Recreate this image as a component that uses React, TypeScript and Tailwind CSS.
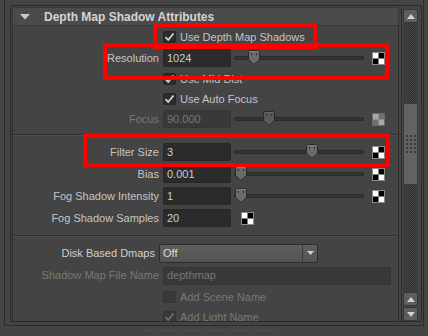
import React from "react";

const label = "text-[11px] leading-none text-[#c4c4c4] whitespace-nowrap";
const dim = "text-[11px] leading-none text-[#787878] whitespace-nowrap";

function Check({ on = true, disabled = false }: { on?: boolean; disabled?: boolean }) {
    return (
        <div
            className={`w-[13px] h-[12px] rounded-[2px] border flex items-center justify-center ${
                disabled ? "bg-[#3a3a3a] border-[#333]" : "bg-[#2b2b2b] border-[#262626]"
            }`}
        >
            {on && (
                <svg width="11" height="10" viewBox="0 0 11 10">
                    <path
                        d="M1.5 5.2 L4.2 8 L9.5 1.5"
                        fill="none"
                        stroke={disabled ? "#6e6e6e" : "#d6d6d6"}
                        strokeWidth="1.8"
                    />
                </svg>
            )}
        </div>
    );
}

function CheckRow({ text, on = true, disabled = false, h }: { text: string; on?: boolean; disabled?: boolean; h: string }) {
    return (
        <div className={`flex items-center pl-[150px] gap-[4px] ${h}`}>
            <Check on={on} disabled={disabled} />
            <span className={disabled ? dim : label}>{text}</span>
        </div>
    );
}

function Field({ value, w, disabled = false }: { value: string; w: string; disabled?: boolean }) {
    return (
        <div
            className={`${w} h-[18px] rounded-[2px] border flex items-center pl-[3px] text-[11px] leading-none ${
                disabled ? "bg-[#393939] border-[#353535] text-[#767676]" : "bg-[#2b2b2b] border-[#272727] text-[#cdcdcd]"
            }`}
        >
            {value}
        </div>
    );
}

function Thumb({ disabled = false }: { disabled?: boolean }) {
    return (
        <svg width="12" height="15" viewBox="0 0 12 15">
            <path
                d="M1.5 0.5 H10.5 L11.5 1.5 V9.5 L6 14.5 L0.5 9.5 V1.5 Z"
                fill={disabled ? "#5a5a5a" : "#6a6a6a"}
                stroke="#2a2a2a"
            />
            <path d="M2 1.5 H10" stroke={disabled ? "#666" : "#808080"} />
            <rect x="3" y="3" width="1" height="2" fill="#2e2e2e" />
            <rect x="8" y="3" width="1" height="2" fill="#2e2e2e" />
        </svg>
    );
}

function Slider({ at, disabled = false }: { at: string; disabled?: boolean }) {
    return (
        <div className="relative ml-[3px] w-[130px] h-[18px] flex items-center">
            <div className="w-full h-[4px] rounded-full bg-[#343434] border border-[#2a2a2a]" />
            <div className={`absolute top-[1px] ${at}`}>
                <Thumb disabled={disabled} />
            </div>
        </div>
    );
}

function MapBtn({ ml, disabled = false }: { ml: string; disabled?: boolean }) {
    const a = disabled ? "#a8a8a8" : "#ffffff";
    const b = disabled ? "#707070" : "#000000";
    return (
        <svg width="13" height="13" viewBox="0 0 13 13" className={ml}>
            <rect x="0.5" y="0.5" width="12" height="12" fill={a} stroke={disabled ? "#6a6a6a" : "#8a8a8a"} />
            <rect x="6.5" y="1" width="5.5" height="5.5" fill={b} />
            <rect x="1" y="6.5" width="5.5" height="5.5" fill={b} />
        </svg>
    );
}

function FieldRow({
    name,
    value,
    h = "h-[22px]",
    disabled = false,
    children,
}: {
    name: string;
    value: string;
    h?: string;
    disabled?: boolean;
    children?: React.ReactNode;
}) {
    return (
        <div className={`flex items-center ${h}`}>
            <div className={`w-[146px] text-right ${disabled ? dim : label}`}>{name}</div>
            <div className="ml-[4px]">
                <Field value={value} w="w-[68px]" disabled={disabled} />
            </div>
            {children}
        </div>
    );
}

function Sep({ mt, mb }: { mt: string; mb: string }) {
    return <div className={`${mt} ${mb} h-[2px] border-t border-[#2f2f2f] border-b border-b-[#4d4d4d] mr-[1px]`} />;
}

function ScrollBtn({ up }: { up: boolean }) {
    return (
        <div className="w-[15px] h-[14px] rounded-[2px] bg-[#5e5e5e] border border-[#353535] flex items-center justify-center">
            <svg width="8" height="5" viewBox="0 0 8 5">
                <path d={up ? "M0 5 L4 0 L8 5 Z" : "M0 0 L8 0 L4 5 Z"} fill="#d2d2d2" />
            </svg>
        </div>
    );
}

export default function App() {
    return (
        <div className="relative w-[428px] h-[336px] bg-[#444444] overflow-hidden font-['Liberation_Sans',Arial,sans-serif]">
            {/* outer frame */}
            <div className="ml-[4px] w-[420px] h-[326px] border-x border-b border-[#2b2b2b] pt-[5px] pl-[5px]">
                {/* inner frame */}
                <div className="w-[412px] h-[317px] border border-[#2b2b2b] rounded-[2px] flex pl-[1px] pt-[1px]">
                    {/* attribute panel */}
                    <div className="w-[387px] h-[314px] flex flex-col">
                        <div className="h-[19px] shrink-0 flex items-center bg-[#4b4b4b] border border-[#383838] rounded-t-[2px] pl-[7px]">
                            <svg width="10" height="6" viewBox="0 0 10 6">
                                <path d="M0 0 H10 L5 5.5 Z" fill="#cacaca" />
                            </svg>
                            <span className="ml-[14px] text-[12px] font-bold leading-none text-[#d4d4d4]">
                                Depth Map Shadow Attributes
                            </span>
                        </div>
                        <div className="flex-1 overflow-hidden border-x border-[#2e2e2e] pt-[1px]">
                            <CheckRow text="Use Depth Map Shadows" h="h-[20px]" />
                            <FieldRow name="Resolution" value="1024">
                                <Slider at="left-[14px]" />
                                <MapBtn ml="ml-[8px]" />
                            </FieldRow>
                            <CheckRow text="Use Mid Dist" h="h-[20px]" />
                            <CheckRow text="Use Auto Focus" h="h-[20px]" />
                            <FieldRow name="Focus" value="90.000" h="h-[20px]" disabled>
                                <Slider at="left-[29px]" disabled />
                                <MapBtn ml="ml-[8px]" disabled />
                            </FieldRow>
                            <Sep mt="mt-[5px]" mb="mb-[5px]" />
                            <FieldRow name="Filter Size" value="3">
                                <Slider at="left-[72px]" />
                                <MapBtn ml="ml-[8px]" />
                            </FieldRow>
                            <FieldRow name="Bias" value="0.001">
                                <Slider at="left-[1px]" />
                                <MapBtn ml="ml-[8px]" />
                            </FieldRow>
                            <FieldRow name="Fog Shadow Intensity" value="1">
                                <Slider at="left-[1px]" />
                                <MapBtn ml="ml-[8px]" />
                            </FieldRow>
                            <FieldRow name="Fog Shadow Samples" value="20">
                                <MapBtn ml="ml-[10px]" />
                            </FieldRow>
                            <Sep mt="mt-[6px]" mb="mb-[5px]" />
                            <div className="flex items-center h-[22px]">
                                <div className={`w-[142px] text-right ${label} text-[#d0d0d0]`}>Disk Based Dmaps</div>
                                <div className="ml-[4px] w-[159px] h-[19px] rounded-[2px] border border-[#2c2c2c] bg-gradient-to-b from-[#5f5f5f] to-[#535353] flex items-center">
                                    <span className="flex-1 pl-[3px] text-[11px] leading-none text-[#dadada]">Off</span>
                                    <div className="w-[15px] h-full border-l border-[#3a3a3a] flex items-center justify-center">
                                        <svg width="7" height="4" viewBox="0 0 7 4">
                                            <path d="M0 0 H7 L3.5 4 Z" fill="#cfcfcf" />
                                        </svg>
                                    </div>
                                </div>
                            </div>
                            <div className="flex items-center h-[23px]">
                                <div className={`w-[146px] text-right ${dim}`}>Shadow Map File Name</div>
                                <div className="ml-[4px]">
                                    <Field value="depthmap" w="w-[228px]" disabled />
                                </div>
                            </div>
                            <CheckRow text="Add Scene Name" on={false} disabled h="h-[20px]" />
                            <CheckRow text="Add Light Name" disabled h="h-[20px]" />
                        </div>
                    </div>
                    {/* divider lines */}
                    <div className="w-[3px] border-r border-[#2e2e2e]" />
                    {/* scrollbar */}
                    <div className="w-[17px] pl-[1px] pt-[2px] flex flex-col">
                        <ScrollBtn up />
                        <div className="w-[15px] h-[80px] bg-[repeating-conic-gradient(#303030_0_25%,#474747_0_50%)] bg-[length:2px_2px]" />
                        <div className="w-[15px] h-[82px] rounded-[2px] bg-[#626262] border border-[#3a3a3a] flex flex-col items-center justify-center gap-[2px]">
                            {[0, 1, 2, 3, 4].map((r) => (
                                <div key={r} className="flex gap-[2px]">
                                    <div className="w-[2px] h-[2px] bg-[#3c3c3c]" />
                                    <div className="w-[2px] h-[2px] bg-[#3c3c3c]" />
                                    <div className="w-[2px] h-[2px] bg-[#3c3c3c]" />
                                </div>
                            ))}
                        </div>
                        <div className="w-[15px] flex-1 bg-[repeating-conic-gradient(#303030_0_25%,#474747_0_50%)] bg-[length:2px_2px]" />
                        <ScrollBtn up />
                        <div className="h-[1px]" />
                        <ScrollBtn up={false} />
                    </div>
                </div>
            </div>
            {/* resize grip */}
            <div className="mt-[4px] ml-[145px] w-[138px] h-[1px] bg-[repeating-linear-gradient(90deg,#5a5a5a_0_1px,transparent_1px_3px)]" />

            {/* annotation boxes */}
            <div className="absolute left-[153px] top-[23px] w-[164px] h-[26px] border-4 border-[#ff0000]" />
            <div className="absolute left-[103px] top-[43px] w-[286px] h-[37px] border-4 border-[#ff0000]" />
            <div className="absolute left-[83px] top-[134px] w-[307px] h-[33px] border-4 border-[#ff0000]" />
        </div>
    );
}
